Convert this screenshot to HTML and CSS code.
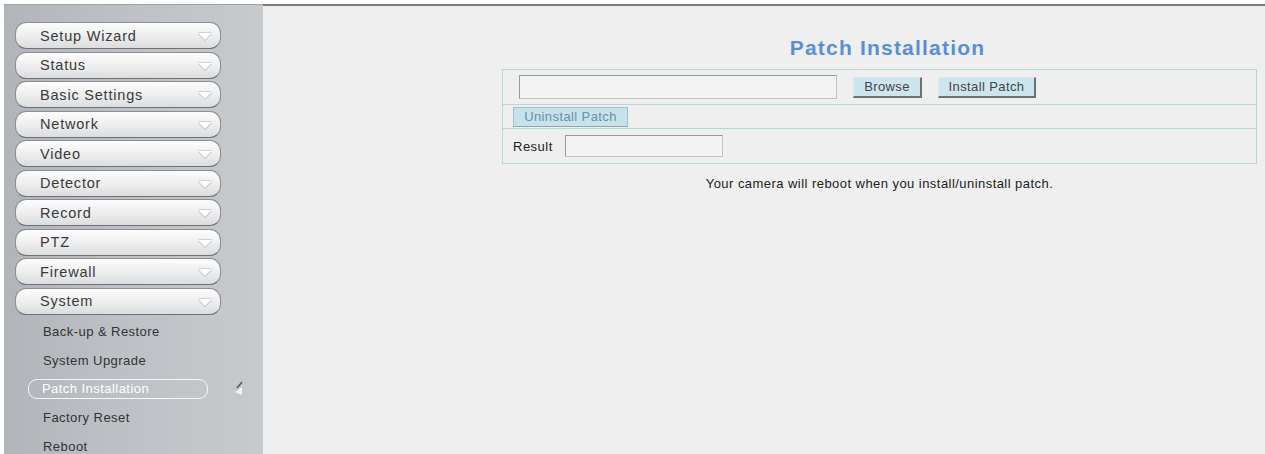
FILE: index.html
```html
<!DOCTYPE html>
<html>
<head>
<meta charset="utf-8">
<link rel="stylesheet" href="styles.css">
</head>
<body>
<div class="page">
  <nav class="sidebar">
    <div class="menu-btn"><span>Setup Wizard</span><i class="tri"></i></div>
    <div class="menu-btn"><span>Status</span><i class="tri"></i></div>
    <div class="menu-btn"><span>Basic Settings</span><i class="tri"></i></div>
    <div class="menu-btn"><span>Network</span><i class="tri"></i></div>
    <div class="menu-btn"><span>Video</span><i class="tri"></i></div>
    <div class="menu-btn"><span>Detector</span><i class="tri"></i></div>
    <div class="menu-btn"><span>Record</span><i class="tri"></i></div>
    <div class="menu-btn"><span>PTZ</span><i class="tri"></i></div>
    <div class="menu-btn"><span>Firewall</span><i class="tri"></i></div>
    <div class="menu-btn"><span>System</span><i class="tri"></i></div>
    <div class="sub">Back-up &amp; Restore</div>
    <div class="sub">System Upgrade</div>
    <div class="sub sub-active"><span class="pill">Patch Installation</span><svg class="marker" width="12" height="16" viewBox="0 0 12 16"><path d="M10 6 L3 11 L10 14 Z" fill="#f4f4f4"/><path d="M10 1 L5 7" stroke="#555" stroke-width="1.4"/></svg></div>
    <div class="sub">Factory Reset</div>
    <div class="sub">Reboot</div>
  </nav>
  <main class="main">
    <div class="content">
      <h1 class="title">Patch Installation</h1>
      <div class="panel">
        <div class="row row1">
          <div class="field file-field"></div>
          <button class="btn btn-browse">Browse</button>
          <button class="btn btn-install">Install Patch</button>
        </div>
        <div class="row row2">
          <button class="btn btn-uninstall">Uninstall Patch</button>
        </div>
        <div class="row row3">
          <span class="label">Result</span>
          <div class="field result-field"></div>
        </div>
      </div>
      <p class="note">Your camera will reboot when you install/uninstall patch.</p>
    </div>
  </main>
</div>
</body>
</html>
```
FILE: styles.css
```css
html, body {
  margin: 0;
  padding: 0;
  background: #ffffff;
  font-family: "Liberation Sans", Arial, sans-serif;
}
.page {
  display: flex;
  padding: 4px 0 0 4px;
  height: 450px;
  overflow: hidden;
}
.sidebar {
  width: 248px;
  flex: none;
  padding: 17px 0 0 11px;
  background: linear-gradient(to right, #b1b5b9 0%, #bcc0c4 40%, #c7cacd 100%);
  border-top: 1px solid #9ea2a6;
}
.menu-btn {
  box-sizing: border-box;
  width: 206px;
  height: 27px;
  margin-bottom: 2.5px;
  border-radius: 11px;
  border: 1px solid #8c8f92;
  border-bottom-color: #6f7275;
  background: linear-gradient(to bottom, #fdfdfd 0%, #f0f0f0 45%, #dcdddf 100%);
  display: flex;
  align-items: center;
  justify-content: space-between;
  padding: 0 8px 0 24px;
  font-size: 14.5px;
  letter-spacing: 0.8px;
  color: #3a3a3a;
}
.tri {
  width: 0;
  height: 0;
  border-left: 7px solid transparent;
  border-right: 7px solid transparent;
  border-top: 7px solid #ffffff;
  filter: drop-shadow(0 1px 0 #b4b6b8) drop-shadow(0 -1px 0 #d0d2d4);
  margin-top: 2px;
}
.sub {
  height: 28.7px;
  display: flex;
  align-items: center;
  padding-left: 28px;
  font-size: 13px;
  letter-spacing: 0.45px;
  color: #333;
}
.sub-active {
  padding-left: 13px;
}
.pill {
  box-sizing: border-box;
  width: 180px;
  height: 20px;
  border: 1.5px solid #f6f6f6;
  border-radius: 9px;
  color: #ffffff;
  display: flex;
  align-items: center;
  padding-left: 13px;
}
.marker {
  margin-left: 24px;
}
.main {
  flex: 1;
  background: #efefef;
  border-top: 2px solid #7b7b7b;
}
.content {
  width: 755px;
  margin-left: 239px;
}
.title {
  margin: 0;
  padding: 30px 0 0 16px;
  height: 33px;
  text-align: center;
  font-size: 21px;
  font-weight: bold;
  color: #5a8fd4;
  letter-spacing: 1.2px;
  line-height: 24px;
}
.panel {
  border: 1px solid #b7d6d6;
}
.row {
  display: flex;
  align-items: center;
  box-sizing: border-box;
}
.row + .row {
  border-top: 1px solid #b7d6d6;
}
.row1 { height: 34px; padding-left: 16px; }
.row2 { height: 24px; padding-left: 10px; }
.row3 { height: 35px; padding-left: 10px; }
.field {
  box-sizing: border-box;
  background: #f3f3f3;
  border: 1px solid #9a9a9a;
  border-right-color: #c4c4c4;
  border-bottom-color: #c4c4c4;
}
.file-field { width: 318px; height: 24px; }
.result-field { width: 158px; height: 22px; margin-left: 12px; }
.btn {
  box-sizing: border-box;
  height: 21px;
  padding: 0;
  background: #cde6ee;
  border: 1px solid #d8ecf2;
  border-right: 2px solid #6e7173;
  border-bottom: 2px solid #6e7173;
  font-family: "Liberation Sans", Arial, sans-serif;
  font-size: 13px;
  letter-spacing: 0.4px;
  color: #444;
}
.btn-browse { width: 69px; margin-left: 16px; }
.btn-install { width: 98px; margin-left: 16px; }
.btn-uninstall {
  width: 115px;
  height: 20px;
  color: #6b8ea6;
  background: #c6e3ec;
  border: 1px solid #9cc3cf;
  border-bottom-color: #8aa8b2;
}
.label {
  font-size: 13px;
  letter-spacing: 0.5px;
  color: #222;
}
.note {
  margin: 12px 0 0;
  text-align: center;
  font-size: 13px;
  letter-spacing: 0.45px;
  color: #222;
}
```
